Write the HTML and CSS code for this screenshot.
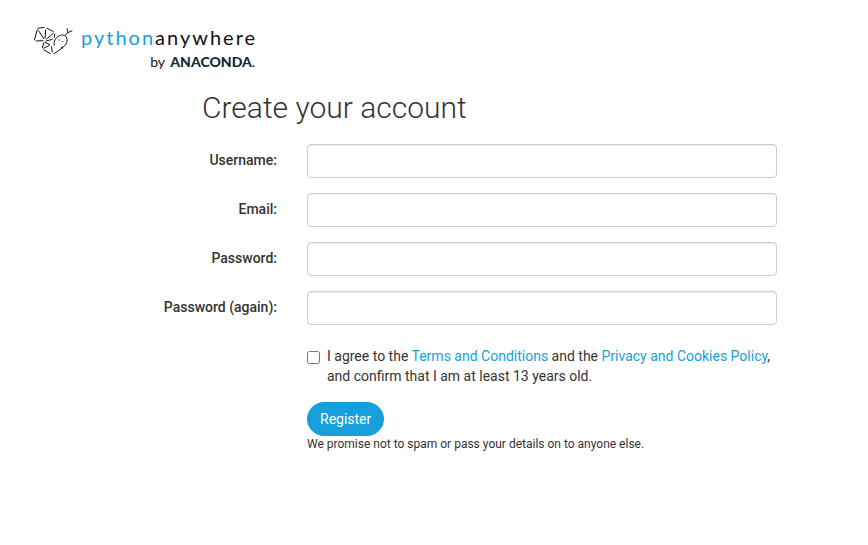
FILE: index.html
```html
<!DOCTYPE html>
<html lang="en">
<head>
  <meta charset="UTF-8" />
  <meta name="viewport" content="width=device-width, initial-scale=1">
  <title>Create your account: PythonAnywhere</title>
  <link rel="stylesheet" href="styles.css">
</head>
<body>
  <header>
    <a class="logo" href="/" aria-label="PythonAnywhere home">
      <svg class="logo-mark" viewBox="15 15 120 90" aria-hidden="true">
        <path d="M28 28L19 61M29 25L49 22M55 24L77 35M23 63L46 62M31 31L48 57M53 29L51 56M55 58L77 39M80 41L79 53M53 63L74 58M48 67L43 84M50 66L66 74M46 85L65 76M46 89L68 101M70 79L73 97M77 102L106 82" />
        <path d="M79 77C76 64 83 52 94 47C104 43 113 45 116 54C120 67 112 80 99 83M111 46L120 38L117 25M120 38L133 32" />
        <path class="logo-eye" d="M92 60h3M103 65h3" />
      </svg>
      <span class="logo-text">
        <span class="logo-name"><span class="logo-python">python</span>anywhere</span>
        <span class="logo-by">by <b>ANACONDA</b>.</span>
      </span>
    </a>
  </header>

  <main class="container">
    <h1>Create your account</h1>

    <form action="#" method="post">
      <div class="form-group">
        <label for="username">Username:</label>
        <input class="form-control" type="text" id="username" name="username">
      </div>
      <div class="form-group">
        <label for="email">Email:</label>
        <input class="form-control" type="email" id="email" name="email">
      </div>
      <div class="form-group">
        <label for="password1">Password:</label>
        <input class="form-control" type="password" id="password1" name="password1">
      </div>
      <div class="form-group">
        <label for="password2">Password (again):</label>
        <input class="form-control" type="password" id="password2" name="password2">
      </div>

      <div class="form-footer">
        <div class="checkbox">
          <input type="checkbox" id="tos" name="tos">
          <label for="tos">I agree to the <a href="#">Terms and Conditions</a> and the <a href="#">Privacy and Cookies Policy</a>, and confirm that I am at least 13 years old.</label>
        </div>
        <button class="btn" type="submit">Register</button>
        <small>We promise not to spam or pass your details on to anyone else.</small>
      </div>
    </form>
  </main>
</body>
</html>
```
FILE: styles.css
```css
* {
  box-sizing: border-box;
}

body {
  margin: 0;
  font-family: Roboto, sans-serif;
  font-size: 14px;
  line-height: 20px;
  color: #333;
  background: #fff;
}

a {
  color: #169fdb;
  text-decoration: none;
}

header {
  padding: 25px 33px 0;
}

.logo {
  display: inline-flex;
  gap: 8px;
  color: #111;
}

.logo-mark {
  width: 40px;
  height: 30px;
  fill: none;
  stroke: #111;
  stroke-width: 3;
}

.logo-text {
  display: flex;
  flex-direction: column;
  align-items: flex-end;
  font-family: Lato, sans-serif;
}

.logo-name {
  font-size: 20px;
  line-height: 24px;
  letter-spacing: 2px;
}

.logo-python {
  color: #169fdb;
}

.logo-by {
  padding-right: 2px;
  font-size: 14px;
  line-height: 26px;
}

.logo-by b {
  margin-left: 2px;
  font-weight: 900;
  color: #0f2b36;
}

.container {
  max-width: 750px;
  margin: 0 auto;
  padding: 0 32px 0 15px;
}

h1 {
  margin: 13px 0 16px 128px;
  font-size: 30px;
  font-weight: 300;
  line-height: 40px;
}

.form-group {
  display: grid;
  grid-template-columns: 203px 1fr;
  column-gap: 30px;
  margin-bottom: 15px;
}

.form-group label {
  padding-top: 6px;
  font-weight: 500;
  text-align: right;
}

.form-control {
  width: 100%;
  height: 34px;
  padding: 6px 12px;
  border: 1px solid #ccc;
  border-radius: 4px;
  box-shadow: inset 0 1px 1px rgba(0, 0, 0, 0.075);
  font: inherit;
}

.form-footer {
  display: flex;
  flex-direction: column;
  align-items: flex-start;
  margin-left: 233px;
  padding-top: 6px;
}

.checkbox {
  display: flex;
  align-items: flex-start;
  gap: 7px;
  margin-bottom: 16px;
}

.checkbox input {
  flex: none;
  width: 13px;
  height: 13px;
  margin: 5px 0 0;
}

.btn {
  padding: 6px 12px;
  border: 1px solid #169fdb;
  border-radius: 17px;
  background: #169fdb;
  color: #fff;
  font: inherit;
  cursor: pointer;
}

small {
  font-size: 12px;
  line-height: 16px;
}
```
